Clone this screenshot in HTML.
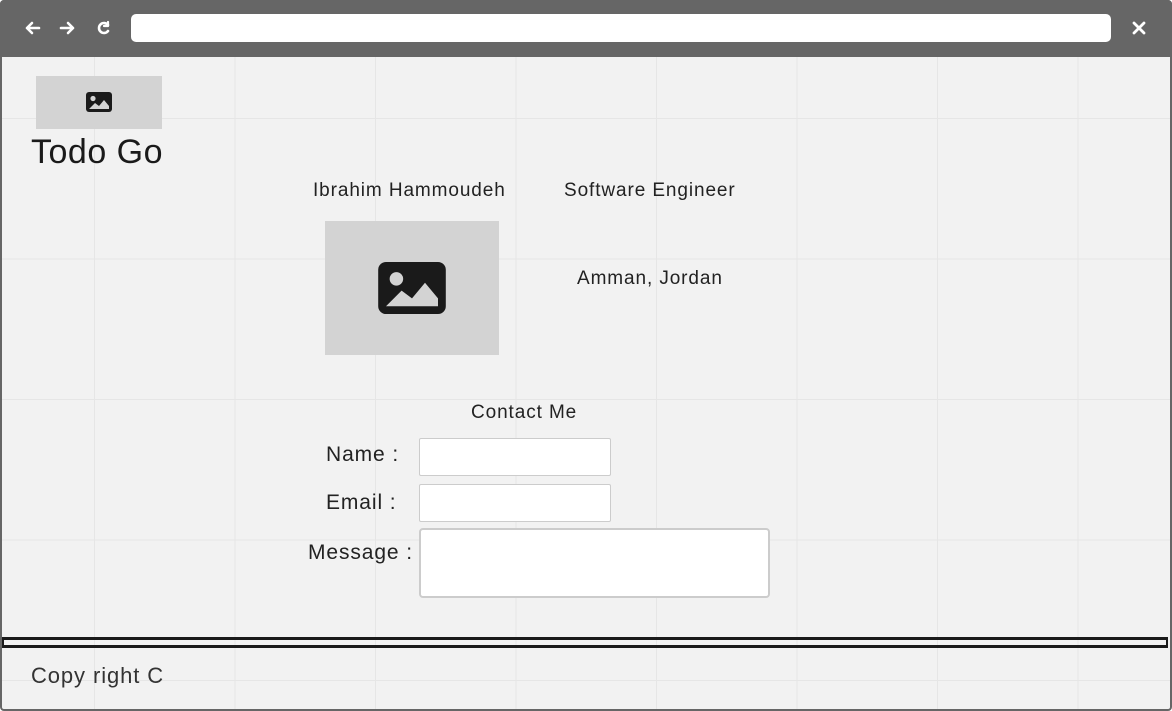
<!DOCTYPE html>
<html><head><style>
*{margin:0;padding:0;box-sizing:border-box}
body{width:1172px;height:711px;overflow:hidden;background:#fff;font-family:"Liberation Sans",sans-serif;position:relative}
.frame{position:absolute;left:0;top:0;width:1172px;height:711px;border:2px solid #666;border-radius:4px;background:#f2f2f2;
background-image:linear-gradient(to right,#e6e6e6 1px,transparent 1px),linear-gradient(to bottom,#e6e6e6 1px,transparent 1px);
background-size:140.5px 140.5px;background-position:92px 116px}
.bar{position:absolute;left:0;top:0;width:1172px;height:57px;background:#666;border-radius:4px 4px 0 0}
.url{position:absolute;left:131px;top:14px;width:980px;height:28px;background:#fff;border-radius:5px}
.t{position:absolute;color:#222;white-space:nowrap;letter-spacing:0.9px}
.ph{position:absolute;background:#d3d3d3}
.in{position:absolute;background:#fff;border:1px solid #ccc;border-radius:2px}
</style></head><body>
<div class="frame"></div>
<div class="bar">
<svg style="position:absolute;left:24px;top:19px" width="90" height="18" viewBox="0 0 90 18" fill="none" stroke="#fff" stroke-width="2.6" stroke-linecap="round" stroke-linejoin="round">
<path d="M15 9H3M8 4L3 9L8 14"/><path d="M37 9H49M44 4L49 9L44 14"/>
<path d="M84 6A5 5 0 1 0 84 12" /><path d="M84 3V7H80" stroke-width="2.2"/>
</svg>
<svg style="position:absolute;left:1132px;top:21px" width="14" height="14" stroke="#fff" stroke-width="2.8" stroke-linecap="round"><path d="M2 2L12 12M12 2L2 12"/></svg>
<div class="url"></div>
</div>
<div class="ph" style="left:36px;top:76px;width:126px;height:53px"></div>
<svg style="position:absolute;left:86px;top:92px" width="26" height="20" viewBox="0 0 26 20"><rect x="0" y="0" width="26" height="20" rx="3" fill="#1a1a1a"/><circle cx="7" cy="6.5" r="2.6" fill="#d3d3d3"/><path d="M3 17L9 11L13 14L18 8L23 14V17Z" fill="#d3d3d3"/></svg>
<div class="t" style="left:31px;top:133px;font-size:34px;letter-spacing:0.5px;color:#1a1a1a">Todo Go</div>
<div class="t" style="left:313px;top:180px;font-size:19px">Ibrahim Hammoudeh</div>
<div class="t" style="left:564px;top:180px;font-size:19px">Software Engineer</div>
<div class="ph" style="left:325px;top:221px;width:174px;height:134px"></div>
<svg style="position:absolute;left:378px;top:262px" width="68" height="52" viewBox="0 0 26 20"><rect x="0" y="0" width="26" height="20" rx="3" fill="#1a1a1a"/><circle cx="7" cy="6.5" r="2.6" fill="#d3d3d3"/><path d="M3 17L9 11L13 14L18 8L23 14V17Z" fill="#d3d3d3"/></svg>
<div class="t" style="left:577px;top:268px;font-size:19px">Amman, Jordan</div>
<div class="t" style="left:471px;top:402px;font-size:19px">Contact Me</div>
<div class="t" style="left:326px;top:443px;font-size:21px">Name :</div>
<div class="t" style="left:326px;top:491px;font-size:21px">Email :</div>
<div class="t" style="left:308px;top:541px;font-size:21px">Message :</div>
<div class="in" style="left:419px;top:438px;width:192px;height:38px"></div>
<div class="in" style="left:419px;top:484px;width:192px;height:38px"></div>
<div class="in" style="left:419px;top:528px;width:351px;height:70px;border:2px solid #ccc;border-radius:4px"></div>
<div style="position:absolute;left:2px;top:637px;width:1166px;height:11px;border:3px solid #1a1a1a;border-width:3px 2px"></div>
<div class="t" style="left:31px;top:663px;font-size:22px;color:#333">Copy right C</div>
</body></html>
